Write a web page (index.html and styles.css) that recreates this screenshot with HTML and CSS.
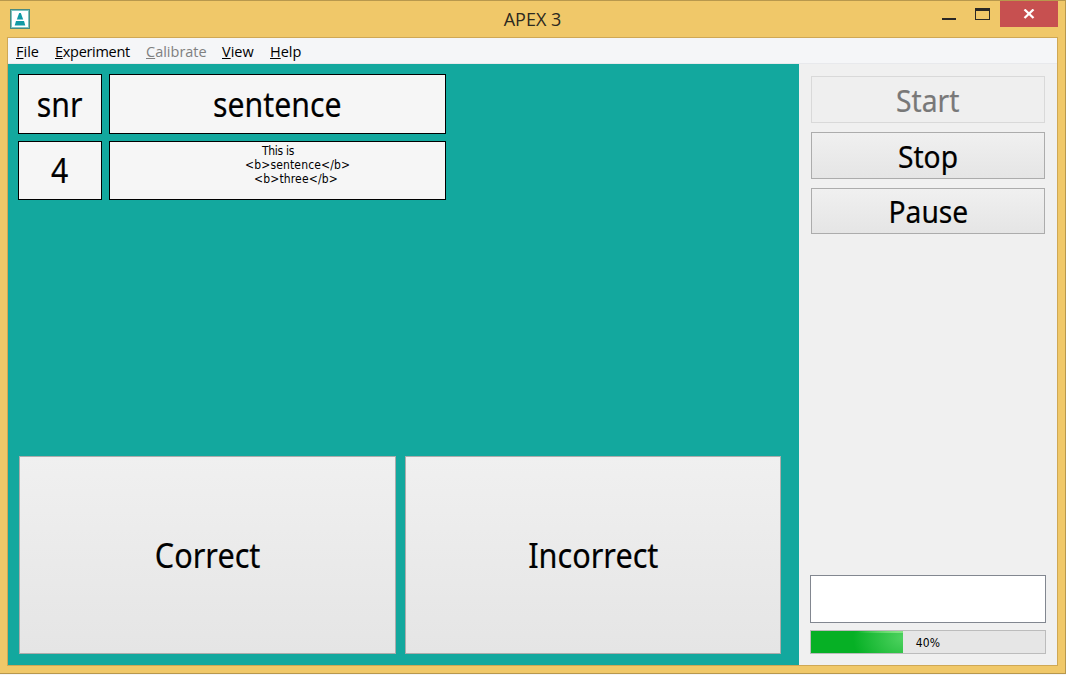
FILE: index.html
```html
<!DOCTYPE html>
<html lang="en">
<head>
<meta charset="utf-8">
<title>APEX 3</title>
<link rel="stylesheet" href="styles.css">
</head>
<body>
<div class="window">
  <header class="titlebar">
    <svg class="app-icon" width="20" height="20" viewBox="0 0 20 20">
      <rect x=".5" y=".5" width="19" height="19" fill="#fff" stroke="#4b8a80"/>
      <rect x="1.5" y="1.5" width="17" height="17" fill="none" stroke="#7cc4c1"/>
      <path d="M9.200 4h1.600l2.400 6.500H6.800z" fill="#119aa5"/>
      <path d="M6 12h8l1.300 4.500H4.700z" fill="#119aa5"/>
    </svg>
    <span class="title">APEX 3</span>
    <div class="controls">
      <svg class="ctl" width="80" height="27" viewBox="0 0 80 27" shape-rendering="crispEdges">
        <path d="M22 18h14v2H22z" fill="#2a2825"/>
        <path d="M55 8h15v12H55zM56 11v8h13v-8z" fill="#2a2825" fill-rule="evenodd"/>
      </svg>
      <div class="close">
        <svg width="12" height="10" viewBox="0 0 12 10"><path d="M1.500.5l9 8.500M10.500.5l-9 8.500" stroke="#fff" stroke-width="2.300"/></svg>
      </div>
    </div>
  </header>
  <div class="client">
    <nav class="menu">
      <span class="m-file"><u>F</u>ile</span>
      <span class="m-exp"><u>E</u>xperiment</span>
      <span class="m-cal disabled"><u>C</u>alibrate</span>
      <span class="m-view"><u>V</u>iew</span>
      <span class="m-help"><u>H</u>elp</span>
    </nav>
    <div class="body">
      <main class="stage">
        <div class="table">
          <div class="cell big"><span>snr</span></div>
          <div class="cell big"><span>sentence</span></div>
          <div class="cell big"><span>4</span></div>
          <div class="cell lines">
            <div class="l1">This is</div>
            <div class="l2">&lt;b&gt;sentence&lt;/b&gt;</div>
            <div class="l3">&lt;b&gt;three&lt;/b&gt;</div>
          </div>
        </div>
        <div class="answers">
          <button class="btn big"><span>Correct</span></button>
          <button class="btn big"><span>Incorrect</span></button>
        </div>
      </main>
      <aside class="side">
        <div class="actions">
          <button class="btn action off"><span>Start</span></button>
          <button class="btn action"><span>Stop</span></button>
          <button class="btn action"><span>Pause</span></button>
        </div>
        <div class="status">
          <div class="message"></div>
          <div class="progress"><div class="chunk"></div><span class="percent">40%</span></div>
        </div>
      </aside>
    </div>
  </div>
</div>
</body>
</html>
```
FILE: styles.css
```css
* { box-sizing: border-box; }
body { margin: 0; background: #f5f5f7; font-family: "Noto Sans", sans-serif; color: #000; overflow: hidden; }
.window { width: 1066px; height: 674px; background: #f0c869; border: solid #b8984d; border-width: 1px 1px 1px 0; padding: 0 7px 7px; display: flex; flex-direction: column; }
.titlebar { height: 36px; display: flex; align-items: flex-start; position: relative; }
.app-icon { margin: 8px 0 0 3px; }
.title { position: absolute; left: 0; right: 0; top: 6px; text-align: center; font: 18px/24px "Open Sans", sans-serif; color: #2c2920; }
.controls { margin-left: auto; display: flex; }
.ctl { margin-top: -1px; }
.close { width: 58px; height: 26px; background: #c75050; display: flex; align-items: center; justify-content: center; }
.client { flex: 1; width: 1051px; border: 1px solid #cfa855; display: flex; flex-direction: column; background: #f0f0f0; }
.menu { height: 26px; background: #f5f6f8; border-bottom: 1px solid #e8e9ec; display: flex; font: 14.5px/28px "Open Sans", sans-serif; padding-left: 8px; }
.menu span { display: block; white-space: nowrap; }
.menu u { text-decoration: underline; text-underline-offset: 1px; text-decoration-thickness: 1px; text-decoration-skip-ink: none; }
.m-file { width: 39px; }
.m-exp { width: 91px; letter-spacing: -0.3px; }
.m-cal { width: 76px; }
.m-view { width: 48px; }
.disabled { color: #808080; }
.body { flex: 1; display: flex; min-height: 0; }
.stage { width: 791px; background: #13a89e; padding: 10px 18px 11px 10px; display: flex; flex-direction: column; justify-content: space-between; }
.table { display: grid; grid-template-columns: 84px 337px; grid-template-rows: 60px 59px; gap: 7px; }
.cell { background: #f6f6f6; border: 1px solid #000; display: flex; align-items: center; justify-content: center; }
.big { font-size: 34px; line-height: 44px; }
.big span { transform: scaleX(.9); padding-bottom: 1px; -webkit-text-stroke: .2px; }
.cell.big span { transform: scaleX(.89); }
.lines { display: block; font-family: "DejaVu Sans Condensed", "DejaVu Sans", sans-serif; font-stretch: condensed; font-size: 12px; line-height: 14px; padding-top: 2px; white-space: nowrap; }
.l1 { padding-left: 152px; letter-spacing: -0.3px; }
.l2 { padding-left: 135px; letter-spacing: 0.15px; }
.l3 { padding-left: 144px; letter-spacing: 0.15px; }
.answers { display: grid; grid-template-columns: 377px 376px; gap: 9px; height: 198px; margin: 0 -1px 0 1px; }
.btn { font-family: inherit; color: #000; border: 1px solid #acacac; background: linear-gradient(#f0f0f0, #e5e5e5); padding: 0; display: flex; align-items: center; justify-content: center; }
.side { flex: 1; padding: 12px 11px 11px; display: flex; flex-direction: column; justify-content: space-between; }
.actions { display: flex; flex-direction: column; gap: 9px; margin: 0 1px; }
.action { height: 47px; font-size: 30px; line-height: 40px; }
.action:last-child { height: 46px; }
.action span { transform: scaleX(.94); padding-top: 2px; -webkit-text-stroke: .2px; }
.off { color: #787878; border-color: #d9d9d9; background: #efefef; }
.status { display: flex; flex-direction: column; gap: 7px; }
.message { height: 48px; background: #fff; border: 1px solid #828790; }
.progress { height: 24px; border: 1px solid #bcbcbc; background: #e6e6e6; position: relative; }
.chunk { width: 92px; height: 100%; background: linear-gradient(90deg, transparent 50%, #82e482 95%) top / 100% 2px no-repeat, radial-gradient(ellipse 50px 38px at 100% 30%, #4fd260, rgba(6,176,37,0)), #06b025; }
.percent { position: absolute; left: 0; right: 0; top: 0; line-height: 24px; text-align: center; font-family: "DejaVu Sans Condensed", "DejaVu Sans", sans-serif; font-stretch: condensed; font-size: 12px; letter-spacing: 0.2px; }
```
